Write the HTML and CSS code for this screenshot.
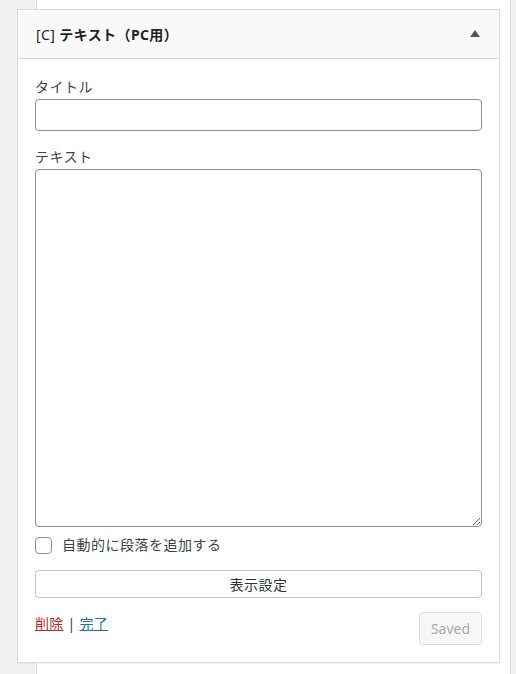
FILE: index.html
```html
<!DOCTYPE html>
<html lang="ja">
<head>
  <meta charset="UTF-8" />
  <meta name="viewport" content="width=device-width, initial-scale=1" />
  <title>ウィジェット</title>
  <link rel="stylesheet" href="styles.css">
</head>
<body>

  <div class="sidebar">
    <div class="widget">
      <div class="widget-top">
        <h3 class="widget-title"><span class="tag">[C]</span> テキスト（PC用）</h3>
        <svg class="toggle" width="10" height="7" viewBox="0 0 10 7">
          <polygon points="5,0 10,7 0,7" fill="#50575e" />
        </svg>
      </div>

      <form class="widget-inside">
        <label class="field-label" for="title">タイトル</label>
        <input type="text" id="title" class="text-input" />

        <label class="field-label" for="text">テキスト</label>
        <textarea id="text" class="text-area"></textarea>

        <label class="check-row">
          <input type="checkbox" class="check" />
          <span>自動的に段落を追加する</span>
        </label>

        <button type="button" class="display-btn">表示設定</button>

        <div class="widget-actions">
          <div class="links">
            <a href="#" class="delete-link">削除</a> | <a href="#" class="done-link">完了</a>
          </div>
          <button type="button" class="save-btn" disabled>Saved</button>
        </div>
      </form>
    </div>
  </div>

</body>
</html>
```

FILE: styles.css
```css
body {
  margin: 0;
  background: #f0f0f1;
  font-family: "Noto Sans", "Noto Sans CJK JP", sans-serif;
  font-size: 14px;
  color: #3c434a;
}
.sidebar {
  margin-left: 36px;
  width: 475px;
  min-height: 674px;
  background: #fff;
  border-left: 1px solid #dcdcde;
  border-right: 1px solid #dcdcde;
  padding-top: 9px;
  box-sizing: border-box;
}
.widget {
  box-sizing: border-box;
  margin-left: -20px;
  width: 483px;
  background: #fff;
  border: 1px solid #dcdcde;
  box-shadow: 0 1px 1px rgba(0, 0, 0, 0.04);
}
.widget-top {
  height: 48px;
  background: #f9f9f9;
  border-bottom: 1px solid #dcdcde;
  display: flex;
  align-items: center;
  justify-content: space-between;
  padding: 0 19px 0 18px;
}
.widget-title {
  margin: 0;
  font-size: 14px;
  font-weight: 700;
  color: #1d2327;
  letter-spacing: 0.4px;
}
.widget-title .tag {
  font-weight: 400;
}
.toggle {
  display: block;
  margin-top: -1px;
}
.widget-inside {
  padding: 18px 17px 17px;
  display: flex;
  flex-direction: column;
}
.field-label {
  line-height: 20px;
  margin-bottom: 2px;
  letter-spacing: 0.5px;
}
.text-input, .text-area {
  box-sizing: border-box;
  width: 100%;
  border: 1px solid #8c8f94;
  border-radius: 4px;
  font: inherit;
  margin: 0 0 16px;
}
.text-input {
  height: 32px;
}
.text-area {
  height: 358px;
  margin-bottom: 8px;
  resize: both;
}
.check-row {
  display: flex;
  align-items: center;
  gap: 10px;
  line-height: 20px;
  letter-spacing: 0.5px;
}
.check {
  appearance: none;
  margin: 0;
  width: 17px;
  height: 17px;
  border: 1px solid #8c8f94;
  border-radius: 4px;
  background: #fff;
}
.display-btn {
  margin-top: 15px;
  height: 28px;
  background: #fff;
  border: 1px solid #c3c4c7;
  border-radius: 4px;
  font: inherit;
  color: #2c3338;
  letter-spacing: 0.5px;
}
.widget-actions {
  margin-top: 14px;
  display: flex;
  justify-content: space-between;
  align-items: flex-start;
}
.links {
  padding-top: 2px;
  line-height: 20px;
  color: #3c434a;
  letter-spacing: 0.3px;
}
.delete-link {
  color: #b32d2e;
}
.done-link {
  color: #2271b1;
}
.save-btn {
  width: 63px;
  height: 33px;
  background: #f6f7f7;
  border: 1px solid #dcdcde;
  border-radius: 4px;
  font: inherit;
  color: #a7aaad;
}
```
